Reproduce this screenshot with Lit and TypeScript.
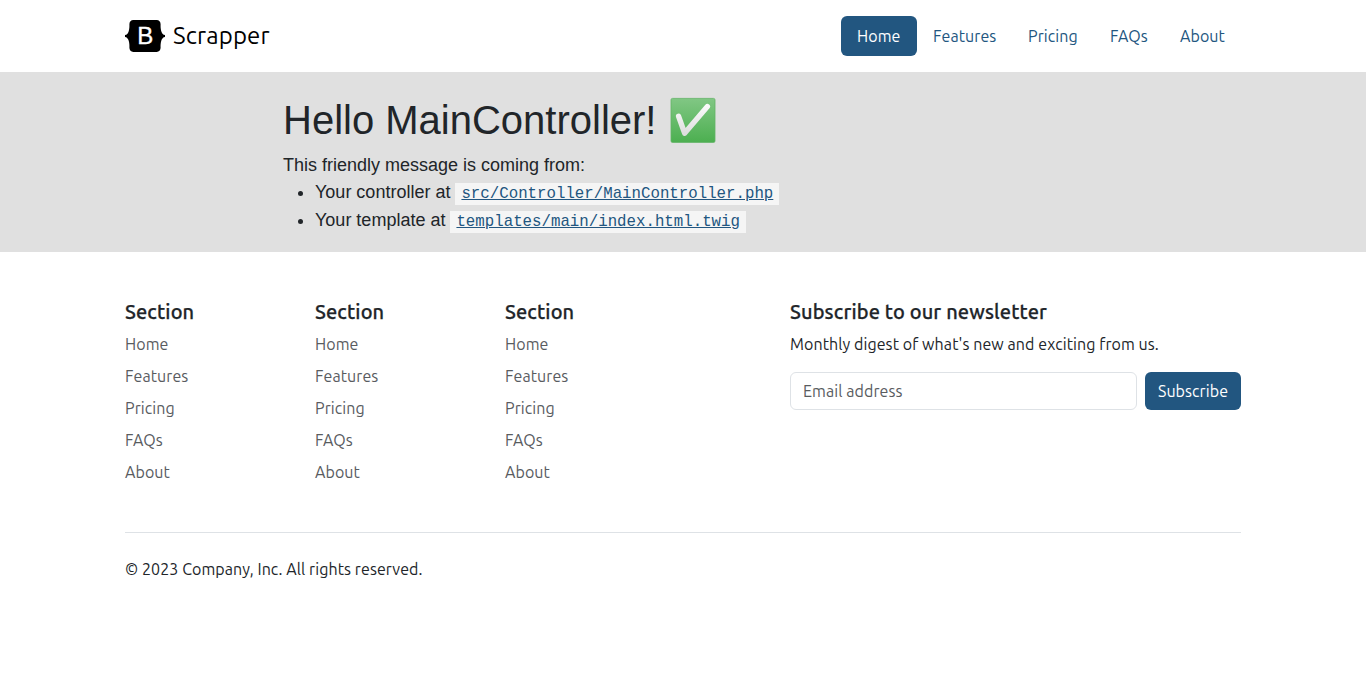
import { LitElement, html, css } from "lit";
import { customElement } from "lit/decorators.js";

const LINKS = ["Home", "Features", "Pricing", "FAQs", "About"];

@customElement("app-root")
export class AppRoot extends LitElement {
  static styles = css`
    :host {
      display: block;
      min-height: 695px;
      background: #fff;
      color: #212529;
      font: 400 16px/24px Ubuntu, "Noto Sans", sans-serif;
      letter-spacing: 0.08px;
    }
    * { box-sizing: border-box; }
    a { text-decoration: none; color: #225680; }
    ul { margin: 0; padding: 0; list-style: none; }
    p, h1, h5 { margin: 0; }
    .container { width: 1116px; margin: 0 auto; }
    .header { display: flex; justify-content: space-between; align-items: center; height: 72px; }
    .brand { display: flex; align-items: center; color: #000; font-size: 24px; line-height: 36px; letter-spacing: 0.15px; }
    .logo { width: 40px; height: 32px; margin-right: 8px; }
    .mark { font: 71px "Liberation Sans", sans-serif; letter-spacing: 0; fill: #fff; stroke: #fff; stroke-width: 1px; }
    .nav { display: grid; grid-template-columns: 76px 95px 82px 70px 77px; }
    .nav a { display: block; padding: 8px 0 8px 16px; border-radius: 6px; white-space: nowrap; }
    .nav .active { background: #225680; color: #fff; }
    .main { height: 180px; padding-top: 24px; background: #e0e0e0; }
    .example { width: 800px; margin: 0 auto; font: 18px/27px "Liberation Sans", sans-serif; letter-spacing: 0; }
    .title { display: flex; align-items: center; height: 48px; margin-bottom: 8px; font-size: 40px; font-weight: 400; line-height: 48px; }
    .check { width: 46px; height: 46px; margin-left: 13.5px; }
    .example ul { list-style: disc; padding-left: 32px; }
    .example li { height: 28px; line-height: 27px; }
    .code { padding: 2px 6px; background: #f5f5f5; font: 15.75px "Liberation Mono", monospace; }
    .code a { text-decoration: underline; }
    .columns { display: grid; grid-template-columns: 190px 190px 285px 451px; padding-top: 48px; height: 280px; }
    h5 { margin-bottom: 8px; font-size: 20px; font-weight: 500; line-height: 24px; letter-spacing: 0.13px; white-space: nowrap; -webkit-text-stroke: 0.25px; }
    .links li { margin-bottom: 8px; }
    .links a { color: #595c5f; }
    .form { display: flex; gap: 8px; margin-top: 16px; }
    .input { flex: 1; min-width: 0; height: 38px; padding: 6px 12px; border: 1px solid #dee2e6; border-radius: 6px; font: inherit; letter-spacing: inherit; color: #212529; background: #fff; }
    .input::placeholder { color: #595c5f; opacity: 1; }
    .button { width: 96px; height: 38px; padding: 0; border: 0; border-radius: 6px; background: #225680; color: #fff; font: inherit; letter-spacing: inherit; }
    .copyright { border-top: 1px solid #dee2e6; padding-top: 24px; }
  `;

  render() {
    return html`
      <header class="header container">
        <a class="brand" href="#">
          <svg class="logo" viewBox="0 0 118 94" aria-hidden="true">
            <path d="M24.509 0c-6.733 0-11.715 5.893-11.492 12.284.214 6.14-.064 14.092-2.066 20.577C8.943 39.365 5.547 43.485 0 44.014v5.972c5.547.529 8.943 4.649 10.951 11.153 2.002 6.485 2.28 14.437 2.066 20.577C12.794 88.106 17.776 94 24.51 94H93.5c6.733 0 11.714-5.893 11.491-12.284-.214-6.14.064-14.092 2.066-20.577 2.009-6.504 5.396-10.624 10.943-11.153v-5.972c-5.547-.529-8.934-4.649-10.943-11.153-2.002-6.484-2.28-14.437-2.066-20.577C105.214 5.894 100.233 0 93.5 0H24.508z" />
            <text class="mark" x="36" y="71.5">B</text>
          </svg>
          <span>Scrapper</span>
        </a>
        <nav class="nav">
          ${LINKS.map((l, i) => html`<a class=${i === 0 ? "active" : ""} href="#">${l}</a>`)}
        </nav>
      </header>
      <main class="main">
        <div class="example">
          <h1 class="title">
            <span>Hello MainController!</span>
            <svg class="check" viewBox="0 0 46 46" role="img" aria-label="check">
              <defs>
                <linearGradient id="g" x2="0" y2="1"><stop stop-color="#81c784" /><stop offset="1" stop-color="#4caf50" /></linearGradient>
                <linearGradient id="w" x2="0" y2="1"><stop stop-color="#fafafa" /><stop offset="1" stop-color="#dedede" /></linearGradient>
              </defs>
              <rect x="1" y="1.4" width="44" height="44" rx="1.5" fill="url(#g)" stroke="#62b466" stroke-width="0.8" />
              <path d="M8.6 19.4 14.6 36.2 37.4 9.6" fill="none" stroke="url(#w)" stroke-width="5.4" stroke-linecap="round" stroke-linejoin="round" />
            </svg>
          </h1>
          <p>This friendly message is coming from:</p>
          <ul>
            <li>Your controller at <code class="code"><a href="#">src/Controller/MainController.php</a></code></li>
            <li>Your template at <code class="code"><a href="#">templates/main/index.html.twig</a></code></li>
          </ul>
        </div>
      </main>
      <footer class="container">
        <div class="columns">
          ${[0, 1, 2].map(() => html`
            <section>
              <h5>Section</h5>
              <ul class="links">${LINKS.map((l) => html`<li><a href="#">${l}</a></li>`)}</ul>
            </section>`)}
          <section>
            <h5>Subscribe to our newsletter</h5>
            <p>Monthly digest of what's new and exciting from us.</p>
            <div class="form">
              <input class="input" type="text" placeholder="Email address" />
              <button class="button" type="button">Subscribe</button>
            </div>
          </section>
        </div>
        <div class="copyright"><p>© 2023 Company, Inc. All rights reserved.</p></div>
      </footer>
    `;
  }
}
